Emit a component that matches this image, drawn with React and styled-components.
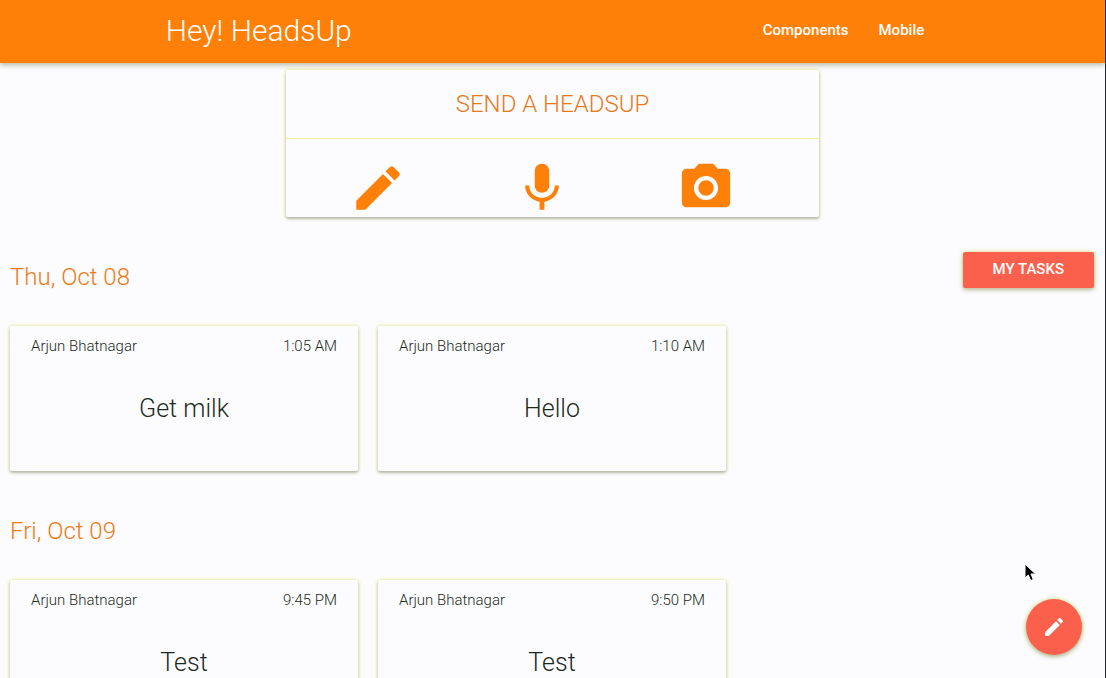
import React from 'react';
import styled, { createGlobalStyle } from 'styled-components';

const GlobalStyle = createGlobalStyle`
  html {
    scrollbar-width: none;
  }

  body {
    margin: 0;
    background: #fcfcfe;
    color: #1c2a1c;
    font-family: Roboto, "Liberation Sans", sans-serif;
    font-size: 15px;
    font-weight: 300;
  }

  * {
    box-sizing: border-box;
  }
`

const Page = styled.div`
  min-height: 100vh;
  padding-bottom: 40px;
  border-right: 1px solid #25252d;
`

const Navbar = styled.nav`
  height: 63px;
  background: #ff8008;
  box-shadow: 0 2px 5px 0 rgba(80, 80, 30, 0.4);

  .nav_inner{
    display: flex;
    align-items: center;
    justify-content: space-between;
    width: 70%;
    height: 60px;
    margin: 0 auto;
  }
`

const Brand = styled.a`
  color: #fff;
  font-size: 30px;
  text-decoration: none;
`

const NavLinks = styled.ul`
  display: flex;
  margin: 0;
  padding: 0;
  list-style: none;

  a{
    padding: 0 15px;
    color: #fff;
    font-weight: 500;
    text-decoration: none;
  }
`

const Card = styled.article`
  background: #fcfcfe;
  border-radius: 2px;
  box-shadow: 0 2px 3px 0 rgba(70, 70, 100, 0.35), 0 0 4px 0 rgba(225, 225, 90, 0.7);
`

const SendCard = styled(Card)`
  width: calc(50% - 20px);
  margin: 7px auto 0;

  h2{
    margin: 0;
    padding: 20px 0 19px;
    border-bottom: 1px solid #f3f0a0;
    color: #e8791a;
    font-size: 24px;
    font-weight: 300;
    line-height: 29px;
    text-align: center;
  }

  .send_actions{
    display: grid;
    grid-template-columns: repeat(3, 1fr);
    justify-items: center;
    padding: 20px 31px 0 10px;
  }
`

const IconButton = styled.button`
  display: flex;
  padding: 0;
  border: none;
  background: none;
  color: #ff8008;
  cursor: pointer;
`

const Day = styled.section`
  padding: 0 11px 0 10px;
`

const DayHeader = styled.header`
  display: flex;
  align-items: flex-start;
  justify-content: space-between;
  min-height: 109px;
  padding-top: 35px;

  h3{
    margin: 11px 0 0;
    color: #ee7a18;
    font-size: 24px;
    font-weight: 300;
    line-height: 29px;
  }
`

const TasksButton = styled.button`
  height: 36px;
  padding: 0 30px 2px;
  border: none;
  border-radius: 2px;
  background: #fb604c;
  box-shadow: 0 2px 4px 0 rgba(60, 60, 60, 0.3), 0 0 5px 0 rgba(225, 225, 90, 0.7);
  color: #fff;
  cursor: pointer;
  font-family: inherit;
  font-size: 15px;
  font-weight: 500;
  text-transform: uppercase;
`

const CardGrid = styled.div`
  display: grid;
  grid-template-columns: repeat(3, 1fr);
  gap: 20px;
`

const TaskCard = styled(Card)`
  min-height: 145px;
  padding: 11px 21px;

  .task_meta{
    display: flex;
    justify-content: space-between;
    line-height: 18px;
  }

  .task_text{
    margin: 39px 0 0;
    font-size: 25px;
    line-height: 30px;
    text-align: center;
  }
`

const FloatingButton = styled.button`
  position: fixed;
  right: 24px;
  bottom: 23px;
  display: flex;
  align-items: center;
  justify-content: center;
  width: 56px;
  height: 56px;
  padding: 0;
  border: none;
  border-radius: 50%;
  background: #fb604c;
  box-shadow: 0 2px 4px 0 rgba(60, 60, 60, 0.35), 0 0 5px 0 rgba(225, 225, 90, 0.7);
  color: #fff;
  cursor: pointer;
`

const Pointer = styled.svg`
  position: fixed;
  right: 69px;
  bottom: 95px;
  pointer-events: none;
`

const icons = {
  edit: 'M3 17.25V21h3.75L17.81 9.94l-3.75-3.75L3 17.25zM20.71 7.04c.39-.39.39-1.02 0-1.41l-2.34-2.34c-.39-.39-1.02-.39-1.41 0l-1.83 1.83 3.75 3.75 1.83-1.83z',
  pencil: 'M3.3 17L14.06 6.19l3.75 3.75L7 20.7q-.3.3-.7.3H4q-1 0-1-1v-2.3q0-.4.3-.7zM20.5 7.25c.6-.6.6-1.3 0-1.9l-1.85-1.85c-.6-.6-1.3-.6-1.9 0L15.13 5.12l3.75 3.75 1.62-1.62z',
  mic: 'M12 14c1.66 0 2.99-1.34 2.99-3L15 5c0-1.66-1.34-3-3-3S9 3.34 9 5v6c0 1.66 1.34 3 3 3zm5.3-3c0 3-2.54 5.1-5.3 5.1S6.7 14 6.7 11H5c0 3.41 2.72 6.23 6 6.72V21h2v-3.28c3.28-.48 6-3.3 6-6.72h-1.7z',
  camera: 'M12 8.8a3.2 3.2 0 1 0 0 6.4 3.2 3.2 0 0 0 0-6.4zM9 2L7.17 4H4c-1.1 0-2 .9-2 2v12c0 1.1.9 2 2 2h16c1.1 0 2-.9 2-2V6c0-1.1-.9-2-2-2h-3.17L15 2H9zm3 15c-2.76 0-5-2.24-5-5s2.24-5 5-5 5 2.24 5 5-2.24 5-5 5z',
}

const actions = [
  { icon: 'edit', label: 'Write a headsup' },
  { icon: 'mic', label: 'Record a headsup' },
  { icon: 'camera', label: 'Take a picture' },
]

const days = [
  {
    date: 'Thu, Oct 08',
    tasks: [
      { id: 1, user: 'Arjun Bhatnagar', time: '1:05 AM', text: 'Get milk' },
      { id: 2, user: 'Arjun Bhatnagar', time: '1:10 AM', text: 'Hello' },
    ],
  },
  {
    date: 'Fri, Oct 09',
    tasks: [
      { id: 3, user: 'Arjun Bhatnagar', time: '9:45 PM', text: 'Test' },
      { id: 4, user: 'Arjun Bhatnagar', time: '9:50 PM', text: 'Test' },
    ],
  },
]

function Icon({ name, size }) {
  return (
    <svg width={size} height={size} viewBox='0 0 24 24' fill='currentColor' aria-hidden='true'>
      <path d={icons[name]} />
    </svg>
  )
}

function App() {
  return (
    <Page>
      <GlobalStyle />
      <Navbar>
        <div className='nav_inner'>
          <Brand href='#'>Hey! HeadsUp</Brand>
          <NavLinks>
            <li><a href='#components'>Components</a></li>
            <li><a href='#mobile'>Mobile</a></li>
          </NavLinks>
        </div>
      </Navbar>
      <main>
        <SendCard>
          <h2>SEND A HEADSUP</h2>
          <div className='send_actions'>
            {actions.map( x =>(
              <IconButton key={x.icon} aria-label={x.label}><Icon name={x.icon} size={58} /></IconButton>
            ))}
          </div>
        </SendCard>
        {days.map( (day, i) =>(
          <Day key={day.date}>
            <DayHeader>
              <h3>{day.date}</h3>
              {i === 0 ? <TasksButton>My Tasks</TasksButton> : null}
            </DayHeader>
            <CardGrid>
              {day.tasks.map( task =>(
                <TaskCard key={task.id}>
                  <div className='task_meta'>
                    <span>{task.user}</span>
                    <time>{task.time}</time>
                  </div>
                  <p className='task_text'>{task.text}</p>
                </TaskCard>
              ))}
            </CardGrid>
          </Day>
        ))}
      </main>
      <FloatingButton aria-label='New headsup'><Icon name='pencil' size={24} /></FloatingButton>
      <Pointer width='13' height='20' viewBox='0 0 13 20' aria-hidden='true'>
        <path d='M1 1v14l3.3-3 2.4 5.6 2.6-1.1L7 11h4.6z' fill='#000' stroke='#fff' />
      </Pointer>
    </Page>
  )
}

export default App;
